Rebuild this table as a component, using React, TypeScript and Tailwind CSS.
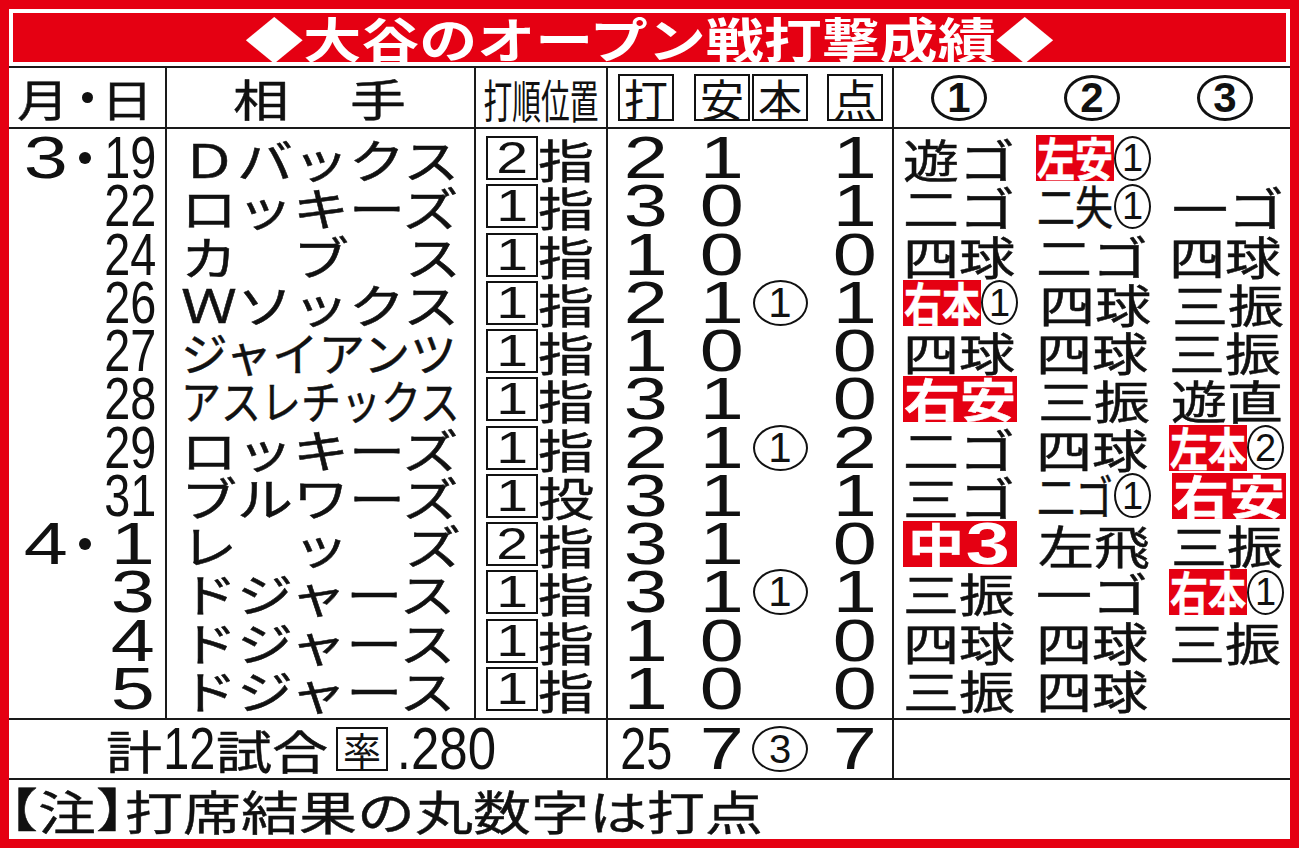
import React from "react";

type Res =
  | null
  | { k: "p"; t: string }
  | { k: "r"; t: string }
  | { k: "m"; t: string }
  | { k: "rc"; t: string; c: string }
  | { k: "pc"; t: string; c: string };

type Row = {
  m?: string;
  d: string;
  wide?: boolean;
  opp: string;
  opc?: "six" | "seven";
  ord: string;
  pos: string;
  ab: string;
  h: string;
  hr?: boolean;
  rbi: string;
  res: Res[];
};

const rows: Row[] = [
  { m: "3", d: "19", opp: "Ｄバックス", ord: "2", pos: "指", ab: "2", h: "1", rbi: "1", res: [{ k: "p", t: "遊ゴ" }, { k: "rc", t: "左安", c: "1" }, null] },
  { d: "22", opp: "ロッキーズ", ord: "1", pos: "指", ab: "3", h: "0", rbi: "1", res: [{ k: "p", t: "二ゴ" }, { k: "pc", t: "二失", c: "1" }, { k: "p", t: "一ゴ" }] },
  { d: "24", opp: "カ　ブ　ス", ord: "1", pos: "指", ab: "1", h: "0", rbi: "0", res: [{ k: "p", t: "四球" }, { k: "p", t: "二ゴ" }, { k: "p", t: "四球" }] },
  { d: "26", opp: "Ｗソックス", ord: "1", pos: "指", ab: "2", h: "1", hr: true, rbi: "1", res: [{ k: "rc", t: "右本", c: "1" }, { k: "p", t: "四球" }, { k: "p", t: "三振" }] },
  { d: "27", opp: "ジャイアンツ", opc: "six", ord: "1", pos: "指", ab: "1", h: "0", rbi: "0", res: [{ k: "p", t: "四球" }, { k: "p", t: "四球" }, { k: "p", t: "三振" }] },
  { d: "28", opp: "アスレチックス", opc: "seven", ord: "1", pos: "指", ab: "3", h: "1", rbi: "0", res: [{ k: "r", t: "右安" }, { k: "p", t: "三振" }, { k: "p", t: "遊直" }] },
  { d: "29", opp: "ロッキーズ", ord: "1", pos: "指", ab: "2", h: "1", hr: true, rbi: "2", res: [{ k: "p", t: "二ゴ" }, { k: "p", t: "四球" }, { k: "rc", t: "左本", c: "2" }] },
  { d: "31", opp: "ブルワーズ", ord: "1", pos: "投", ab: "3", h: "1", rbi: "1", res: [{ k: "p", t: "三ゴ" }, { k: "pc", t: "二ゴ", c: "1" }, { k: "r", t: "右安" }] },
  { m: "4", d: "1", wide: true, opp: "レ　ッ　ズ", ord: "2", pos: "指", ab: "3", h: "1", rbi: "0", res: [{ k: "m", t: "中" }, { k: "p", t: "左飛" }, { k: "p", t: "三振" }] },
  { d: "3", wide: true, opp: "ドジャース", ord: "1", pos: "指", ab: "3", h: "1", hr: true, rbi: "1", res: [{ k: "p", t: "三振" }, { k: "p", t: "一ゴ" }, { k: "rc", t: "右本", c: "1" }] },
  { d: "4", wide: true, opp: "ドジャース", ord: "1", pos: "指", ab: "1", h: "0", rbi: "0", res: [{ k: "p", t: "四球" }, { k: "p", t: "四球" }, { k: "p", t: "三振" }] },
  { d: "5", wide: true, opp: "ドジャース", ord: "1", pos: "指", ab: "1", h: "0", rbi: "0", res: [{ k: "p", t: "三振" }, { k: "p", t: "四球" }, null] },
];

function WD({ d, white = false }: { d: string; white?: boolean }) {
  return (
    <span
      className={`flex w-[48px] shrink-0 justify-center font-['Liberation_Sans',sans-serif] text-[60px] leading-[48px] ${
        white ? "font-bold text-white" : "text-[#111]"
      }`}
    >
      <span className="inline-block scale-x-[1.32]">{d}</span>
    </span>
  );
}

function Cond({ d }: { d: string }) {
  return (
    <span className="flex w-[54px] shrink-0 justify-center font-['Liberation_Sans',sans-serif] text-[60px] leading-[48px]">
      <span className="inline-block scale-x-[0.78]">{d}</span>
    </span>
  );
}

function J({ children, cls = "" }: { children: React.ReactNode; cls?: string }) {
  return (
    <span
      className={`inline-block whitespace-nowrap text-[56px] leading-[48px] scale-y-[0.82] [-webkit-text-stroke:0.6px_currentColor] ${cls}`}
    >
      {children}
    </span>
  );
}

function SmallCircle({ c }: { c: string }) {
  return (
    <span className="flex h-[45px] w-[37px] shrink-0 items-center justify-center rounded-[50%] border-2 border-[#111] font-['Liberation_Sans',sans-serif] text-[38px] leading-none text-[#111]">
      {c}
    </span>
  );
}

function Result({ r }: { r: Res }) {
  if (!r) return <div className="w-[112px] shrink-0" />;
  if (r.k === "p")
    return (
      <div className="flex w-[112px] shrink-0 items-center">
        <J>{r.t}</J>
      </div>
    );
  if (r.k === "r")
    return (
      <div className="flex h-[46px] w-[114px] shrink-0 items-center justify-center bg-[#e50012] text-white">
        <J cls="font-bold -translate-y-[2px]">{r.t}</J>
      </div>
    );
  if (r.k === "m")
    return (
      <div className="flex h-[46px] w-[114px] shrink-0 items-center justify-center bg-[#e50012] text-white">
        <J cls="font-bold -translate-y-[2px]">{r.t}</J>
        <WD d="3" white />
      </div>
    );
  const red = r.k === "rc";
  return (
    <div className="flex w-[115px] shrink-0 items-center">
      <div
        className={`flex h-[46px] w-[78px] shrink-0 items-center justify-center ${
          red ? "bg-[#e50012] text-white" : "text-[#111]"
        }`}
      >
        <J cls={red ? "font-bold scale-x-[0.68] -translate-y-[2px]" : "scale-x-[0.68] -translate-y-[2px]"}>{r.t}</J>
      </div>
      <SmallCircle c={r.c} />
    </div>
  );
}

const line = "border-[#1a1a1a]";
const hs = "[-webkit-text-stroke:0.5px_currentColor]";

export default function App() {
  return (
    <div className="h-[848px] w-[1299px] bg-[#e50012] p-[9px] font-['Noto_Sans_CJK_JP',sans-serif] text-[#111]">
      <div className="flex h-full w-full flex-col bg-white">
        {/* Title */}
        <div className="p-[4px]">
          <div className="flex h-[49px] items-center justify-center bg-[#e50012] text-white">
            <span className="inline-block whitespace-nowrap text-[58px] font-bold leading-[49px] scale-y-[0.82]">
              ◆大谷のオープン戦打撃成績◆
            </span>
          </div>
        </div>

        {/* Header */}
        <div className={`flex h-[63px] border-y-2 ${line}`}>
          <div className={`flex w-[158px] shrink-0 items-center border-r-2 ${line} pl-[8px]`}>
            <span className={`inline-block text-[52px] leading-none scale-y-[0.86] ${hs}`}>月</span>
            <span className="ml-[13px] h-[11px] w-[11px] rounded-full bg-[#111]" />
            <span className={`ml-[8px] inline-block text-[52px] leading-none scale-y-[0.86] ${hs}`}>日</span>
          </div>
          <div className={`flex w-[309px] shrink-0 items-center border-r-2 ${line}`}>
            <span className={`ml-[66px] inline-block text-[56px] leading-none scale-y-[0.8] ${hs}`}>相</span>
            <span className={`ml-[61px] inline-block text-[56px] leading-none scale-y-[0.8] ${hs}`}>手</span>
          </div>
          <div className={`flex w-[132px] shrink-0 items-center justify-center border-r-2 ${line}`}>
            <span className="inline-block whitespace-nowrap text-[46px] leading-none scale-x-[0.625]">打順位置</span>
          </div>
          <div className={`flex w-[286px] shrink-0 items-center border-r-2 ${line}`}>
            {["打", "安", "本", "点"].map((c, i) => (
              <div
                key={c}
                className={`flex h-[47px] w-[56px] shrink-0 items-center justify-center border-2 border-[#111] ${
                  i === 0 ? "ml-[10px]" : i === 1 ? "ml-[20px]" : i === 2 ? "ml-[2px]" : "ml-[19px]"
                }`}
              >
                <span className="inline-block text-[44px] leading-none">{c}</span>
              </div>
            ))}
          </div>
          <div className="flex flex-1 items-center gap-[21px] pl-[9px]">
            {["1", "2", "3"].map((c) => (
              <div key={c} className="flex w-[112px] shrink-0 justify-center">
                <span className="flex h-[46px] w-[56px] items-center justify-center rounded-[50%] border-[3px] border-[#111] font-['Liberation_Sans',sans-serif] text-[42px] font-bold leading-none">
                  {c}
                </span>
              </div>
            ))}
          </div>
        </div>

        {/* Body */}
        <div className={`flex h-[591px] border-b-2 ${line}`}>
          {/* date */}
          <div className={`w-[158px] shrink-0 border-r-2 ${line} py-[5px]`}>
            {rows.map((r, i) => (
              <div key={i} className="flex h-[48.25px] items-center pr-[8px]">
                {r.m && (
                  <>
                    <span className="ml-[13px]">
                      <WD d={r.m} />
                    </span>
                    <span className="ml-[9px] h-[12px] w-[12px] rounded-full bg-[#111]" />
                  </>
                )}
                <span className="ml-auto">{r.wide ? <WD d={r.d} /> : <Cond d={r.d} />}</span>
              </div>
            ))}
          </div>
          {/* opponent */}
          <div className={`w-[309px] shrink-0 border-r-2 ${line} py-[5px] pl-[14px]`}>
            {rows.map((r, i) => (
              <div key={i} className="flex h-[48.25px] items-center">
                <J
                  cls={
                    r.opc === "seven"
                      ? "origin-left scale-x-[0.714]"
                      : r.opc === "six"
                      ? "origin-left scale-x-[0.833]"
                      : ""
                  }
                >
                  {r.opp}
                </J>
              </div>
            ))}
          </div>
          {/* order */}
          <div className={`w-[132px] shrink-0 border-r-2 ${line} py-[5px] pl-[10px]`}>
            {rows.map((r, i) => (
              <div key={i} className="flex h-[48.25px] items-center">
                <span className="flex h-[44px] w-[52px] shrink-0 items-center justify-center border-2 border-[#111] font-['Liberation_Sans',sans-serif] text-[44px] leading-none">
                  <span className="inline-block scale-x-[1.3]">{r.ord}</span>
                </span>
                <J>{r.pos}</J>
              </div>
            ))}
          </div>
          {/* stats */}
          <div className={`w-[286px] shrink-0 border-r-2 ${line} py-[5px]`}>
            {rows.map((r, i) => (
              <div key={i} className="flex h-[48.25px] items-center">
                <div className="ml-[10px] flex w-[56px] shrink-0 justify-center">
                  <WD d={r.ab} />
                </div>
                <div className="ml-[20px] flex w-[56px] shrink-0 justify-center">
                  <WD d={r.h} />
                </div>
                <div className="ml-[2px] flex w-[56px] shrink-0 justify-center">
                  {r.hr && (
                    <span className="flex h-[46px] w-[55px] items-center justify-center rounded-[50%] border-2 border-[#111] font-['Liberation_Sans',sans-serif] text-[42px] leading-none">
                      1
                    </span>
                  )}
                </div>
                <div className="ml-[19px] flex w-[56px] shrink-0 justify-center">
                  <WD d={r.rbi} />
                </div>
              </div>
            ))}
          </div>
          {/* results */}
          <div className="flex-1 py-[5px] pl-[9px]">
            {rows.map((r, i) => (
              <div key={i} className="flex h-[48.25px] items-center gap-[21px]">
                {r.res.map((x, j) => (
                  <Result key={j} r={x} />
                ))}
              </div>
            ))}
          </div>
        </div>

        {/* Total */}
        <div className={`flex h-[60px] border-b-2 ${line}`}>
          <div className={`flex w-[599px] shrink-0 items-center border-r-2 ${line} pl-[97px]`}>
            <J>計</J>
            <Cond d="12" />
            <J>試合</J>
            <span className="ml-[8px] flex h-[44px] w-[52px] shrink-0 items-center justify-center border-2 border-[#111]">
              <span className="inline-block text-[38px] leading-none">率</span>
            </span>
            <span className="ml-[8px] flex w-[100px] shrink-0 justify-center font-['Liberation_Sans',sans-serif] text-[60px] leading-[48px]">
              <span className="inline-block scale-x-[0.85]">.280</span>
            </span>
          </div>
          <div className={`flex w-[286px] shrink-0 items-center border-r-2 ${line}`}>
            <div className="ml-[10px] flex w-[56px] shrink-0 justify-center">
              <Cond d="25" />
            </div>
            <div className="ml-[20px] flex w-[56px] shrink-0 justify-center">
              <WD d="7" />
            </div>
            <div className="ml-[2px] flex w-[56px] shrink-0 justify-center">
              <span className="flex h-[46px] w-[56px] items-center justify-center rounded-[50%] border-2 border-[#111] font-['Liberation_Sans',sans-serif] text-[40px] leading-none">
                3
              </span>
            </div>
            <div className="ml-[19px] flex w-[56px] shrink-0 justify-center">
              <WD d="7" />
            </div>
          </div>
          <div className="flex-1" />
        </div>

        {/* Note */}
        <div className="flex flex-1 items-center">
          <span className="inline-block w-[29px] overflow-hidden">
            <span className={`-ml-[29px] inline-block text-[58px] leading-[48px] scale-y-[0.8] ${hs}`}>【</span>
          </span>
          <span className={`inline-block text-[58px] leading-[48px] scale-y-[0.8] ${hs}`}>注</span>
          <span className="inline-block w-[29px] overflow-hidden">
            <span className={`inline-block text-[58px] leading-[48px] scale-y-[0.8] ${hs}`}>】</span>
          </span>
          <span className={`inline-block whitespace-nowrap text-[58px] leading-[48px] scale-y-[0.8] ${hs}`}>
            打席結果の丸数字は打点
          </span>
        </div>
      </div>
    </div>
  );
}
